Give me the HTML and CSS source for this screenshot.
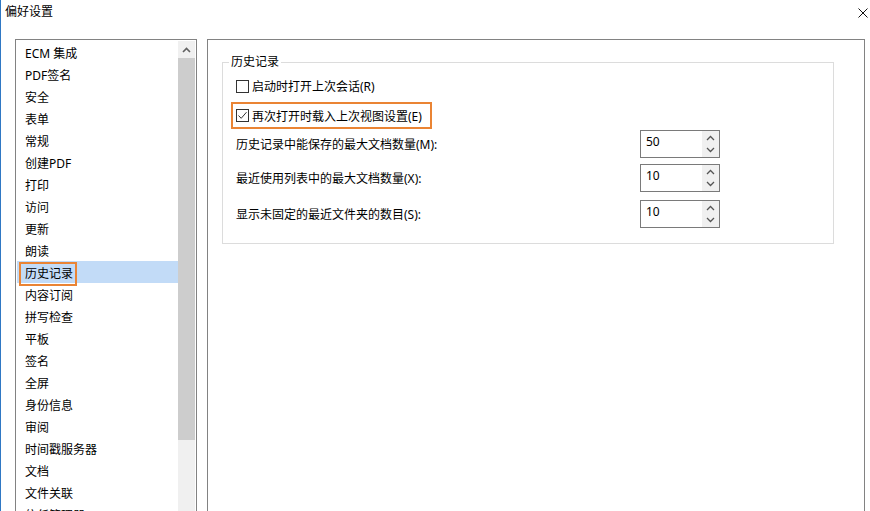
FILE: index.html
```html
<!DOCTYPE html>
<html>
<head>
  <meta charset="utf-8">
  <title>偏好设置</title>
  <link rel="stylesheet" href="styles.css">
</head>
<body>
  <div class="window">
    <div class="titlebar">
      <span class="title">偏好设置</span>
      <svg class="close" width="10" height="10" viewBox="0 0 10 10">
        <path d="M0.5 0.5 L9.5 9.5 M9.5 0.5 L0.5 9.5" stroke="#111" stroke-width="1" fill="none"/>
      </svg>
    </div>

    <div class="content">
      <div class="nav">
        <ul class="nav-list">
          <li>ECM 集成</li>
          <li>PDF签名</li>
          <li>安全</li>
          <li>表单</li>
          <li>常规</li>
          <li>创建PDF</li>
          <li>打印</li>
          <li>访问</li>
          <li>更新</li>
          <li>朗读</li>
          <li class="selected"><span class="mark">历史记录</span></li>
          <li>内容订阅</li>
          <li>拼写检查</li>
          <li>平板</li>
          <li>签名</li>
          <li>全屏</li>
          <li>身份信息</li>
          <li>审阅</li>
          <li>时间戳服务器</li>
          <li>文档</li>
          <li>文件关联</li>
          <li>信任管理器</li>
        </ul>
        <div class="scrollbar">
          <div class="scroll-up">
            <svg width="9" height="6" viewBox="0 0 9 6">
              <path d="M1 5 L4.5 1.5 L8 5" stroke="#606060" stroke-width="1.6" fill="none"/>
            </svg>
          </div>
          <div class="thumb"></div>
        </div>
      </div>

      <div class="panel">
        <fieldset class="group">
          <legend>历史记录</legend>

          <label class="check-row">
            <span class="box"></span>启动时打开上次会话(R)
          </label>

          <label class="check-row marked">
            <span class="box">
              <svg width="11" height="11" viewBox="0 0 11 11">
                <path d="M1.5 5.5 L4.2 8.3 L9.5 2.2" stroke="#333" stroke-width="1" fill="none"/>
              </svg>
            </span>再次打开时载入上次视图设置(E)
          </label>

          <div class="spin-row first">
            <span class="spin-label">历史记录中能保存的最大文档数量(M):</span>
            <div class="spin">
              <span class="spin-value">50</span>
              <div class="spin-buttons">
                <svg width="9" height="6" viewBox="0 0 9 6"><path d="M1 5 L4.5 1.5 L8 5" stroke="#555" stroke-width="1.3" fill="none"/></svg>
                <svg width="9" height="6" viewBox="0 0 9 6"><path d="M1 1 L4.5 4.5 L8 1" stroke="#555" stroke-width="1.3" fill="none"/></svg>
              </div>
            </div>
          </div>

          <div class="spin-row second">
            <span class="spin-label">最近使用列表中的最大文档数量(X):</span>
            <div class="spin">
              <span class="spin-value">10</span>
              <div class="spin-buttons">
                <svg width="9" height="6" viewBox="0 0 9 6"><path d="M1 5 L4.5 1.5 L8 5" stroke="#555" stroke-width="1.3" fill="none"/></svg>
                <svg width="9" height="6" viewBox="0 0 9 6"><path d="M1 1 L4.5 4.5 L8 1" stroke="#555" stroke-width="1.3" fill="none"/></svg>
              </div>
            </div>
          </div>

          <div class="spin-row third">
            <span class="spin-label">显示未固定的最近文件夹的数目(S):</span>
            <div class="spin">
              <span class="spin-value">10</span>
              <div class="spin-buttons">
                <svg width="9" height="6" viewBox="0 0 9 6"><path d="M1 5 L4.5 1.5 L8 5" stroke="#555" stroke-width="1.3" fill="none"/></svg>
                <svg width="9" height="6" viewBox="0 0 9 6"><path d="M1 1 L4.5 4.5 L8 1" stroke="#555" stroke-width="1.3" fill="none"/></svg>
              </div>
            </div>
          </div>
        </fieldset>
      </div>
    </div>
  </div>
</body>
</html>
```

FILE: styles.css
```css
body {
  margin: 0;
  background-color: #fff;
  font-family: "Noto Sans", "Noto Sans CJK SC", sans-serif;
  font-size: 12px;
  color: #000;
}

.window {
  width: 869px;
  height: 511px;
  border-left: 1px solid #2f78c4;
  overflow: hidden;
  background-color: #fff;
}

.titlebar {
  height: 23px;
  display: flex;
  justify-content: space-between;
  align-items: center;
  padding: 0 2px 0 4px;
}

.title {
  line-height: 16px;
}

.close {
  margin-top: 2px;
}

.content {
  display: flex;
  gap: 10px;
  padding: 16px 0 0 14px;
}

/* left list */
.nav {
  width: 182px;
  height: 520px;
  box-sizing: border-box;
  border: 1px solid #828282;
  padding: 1px;
  display: flex;
  flex-shrink: 0;
}

.nav-list {
  list-style: none;
  margin: 0;
  padding: 0;
  flex: 1;
}

.nav-list li {
  height: 22px;
  box-sizing: border-box;
  padding: 4px 0 0 8px;
  line-height: 18px;
  white-space: nowrap;
}

.nav-list li.selected {
  background-color: #c2dbf7;
  padding: 0 0 0 2px;
  display: flex;
  align-items: center;
}

.mark {
  display: inline-block;
  height: 20px;
  line-height: 20px;
  padding: 0 2px 0 4px;
  border: 2px solid #ea8434;
  margin-top: 3px;
}

.scrollbar {
  width: 17px;
  background-color: #f0f0f0;
  display: flex;
  flex-direction: column;
}

.scroll-up {
  height: 17px;
  display: flex;
  justify-content: center;
  align-items: center;
}

.thumb {
  height: 382px;
  background-color: #cdcdcd;
}

/* right panel */
.panel {
  width: 658px;
  height: 520px;
  box-sizing: border-box;
  border: 1px solid #828282;
  padding: 14px 0 0 14px;
  flex-shrink: 0;
}

.group {
  width: 612px;
  box-sizing: border-box;
  margin: 0;
  border: 1px solid #dcdcdc;
  padding: 0 0 15px 8px;
}

.group legend {
  padding: 0 2px;
  margin-left: -2px;
  line-height: 16px;
}

.check-row {
  display: flex;
  align-items: center;
  height: 16px;
  margin-top: 8px;
  padding-left: 5px;
}

.box {
  width: 13px;
  height: 13px;
  box-sizing: border-box;
  border: 1px solid #333;
  background-color: #fff;
  margin-right: 3px;
  display: flex;
  justify-content: center;
  align-items: center;
}

.check-row.marked {
  width: 201px;
  height: 27px;
  box-sizing: border-box;
  border: 2px solid #ea8434;
  padding-left: 3px;
}

.spin-row {
  display: grid;
  grid-template-columns: 404px 80px;
  align-items: center;
  padding-left: 5px;
}

.spin-row.first {
  margin-top: 1px;
}

.spin-row.second {
  margin-top: 6px;
}

.spin-row.third {
  margin-top: 8px;
}

.spin {
  height: 28px;
  box-sizing: border-box;
  border: 1px solid #7a7a7a;
  background-color: #fff;
  display: flex;
  justify-content: space-between;
}

.spin-value {
  padding: 3px 0 0 5px;
  line-height: 16px;
}

.spin-buttons {
  width: 17px;
  background-color: #f0f0f0;
  display: flex;
  flex-direction: column;
  justify-content: center;
  align-items: center;
  gap: 6px;
}
```
